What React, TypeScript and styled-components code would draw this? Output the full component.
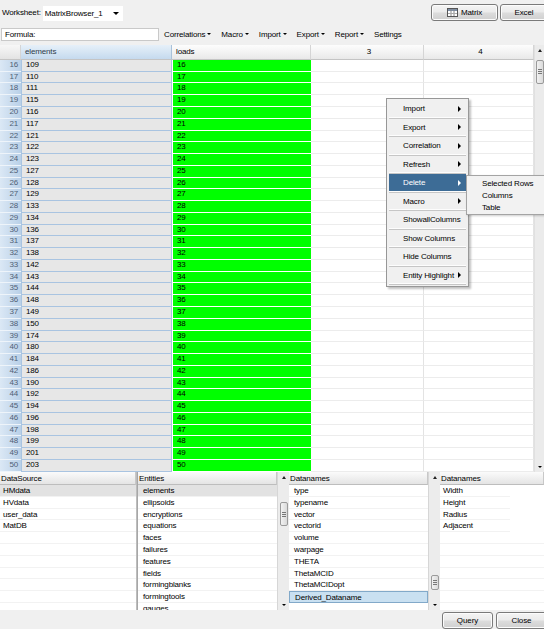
import React from "react";
import styled, { createGlobalStyle, css } from "styled-components";

const GlobalStyle = createGlobalStyle`
  html, body {
    margin: 0;
    padding: 0;
    background: #f0f0f0;
  }
  body {
    font-family: "Liberation Sans", Arial, sans-serif;
    font-size: 8px;
    letter-spacing: -0.15px;
    color: #000;
  }
`;

const Page = styled.div`
  position: relative;
  width: 544px;
  height: 629px;
  display: flex;
  flex-direction: column;
  overflow: hidden;
  background: #f0f0f0;
`;

/* ---------- top bars ---------- */

const TopBar = styled.div`
  height: 26px;
  display: flex;
  align-items: center;
  padding-left: 2px;
  gap: 2px;
`;

const Label = styled.span`
  white-space: nowrap;
`;

const Select = styled.div`
  width: 80px;
  height: 15px;
  box-sizing: border-box;
  background: #fff;
  display: flex;
  align-items: center;
  justify-content: space-between;
  padding: 0 4px 0 2px;
  margin-top: 1px;
`;

const Caret = styled.span<{ $size?: number }>`
  display: inline-block;
  width: 0;
  height: 0;
  border-left: ${(p) => p.$size ?? 3}px solid transparent;
  border-right: ${(p) => p.$size ?? 3}px solid transparent;
  border-top: ${(p) => p.$size ?? 3}px solid #000;
`;

const UpCaret = styled.span`
  display: inline-block;
  width: 0;
  height: 0;
  border-left: 2px solid transparent;
  border-right: 2px solid transparent;
  border-bottom: 3px solid #222;
`;

const Spacer = styled.div`
  flex: 1;
`;

const Button = styled.button<{ $w: number }>`
  width: ${(p) => p.$w}px;
  height: 17px;
  box-sizing: border-box;
  border: 1px solid #7a7a7a;
  border-radius: 3px;
  background: linear-gradient(#f4f4f4 0%, #ebebeb 48%, #dcdcdc 52%, #d0d0d0 100%);
  box-shadow: inset 0 0 0 1px #fcfcfc;
  font-family: "Liberation Sans", Arial, sans-serif;
  font-size: 8px;
  letter-spacing: -0.1px;
  color: #000;
  display: flex;
  align-items: center;
  justify-content: center;
  gap: 3px;
  padding: 0;
`;

const FormulaRow = styled.div`
  height: 17px;
  display: flex;
  align-items: center;
  padding-left: 1px;
  gap: 5px;
`;

const FormulaInput = styled.div`
  width: 158px;
  height: 13px;
  box-sizing: border-box;
  background: #fff;
  border: 1px solid #c9c9c9;
  padding-left: 3px;
  display: flex;
  align-items: center;
`;

const Menus = styled.div`
  display: flex;
  align-items: center;
  gap: 10px;
`;

const MenuItem = styled.span`
  display: inline-flex;
  align-items: center;
  gap: 2px;
  white-space: nowrap;
`;

/* ---------- spreadsheet ---------- */

const SheetArea = styled.div`
  margin-top: 2px;
  height: 428px;
  display: flex;
`;

const Sheet = styled.div`
  width: 534px;
  display: flex;
  flex-direction: column;
  background: #fff;
`;

const COLS = "21px 151px 139px 113px 110px";

const HeaderRow = styled.div`
  height: 15px;
  display: grid;
  grid-template-columns: ${COLS};
`;

const HeadCell = styled.div<{ $tone: "corner" | "selected" | "plain"; $center?: boolean }>`
  box-sizing: border-box;
  border-right: 1px solid #d5d5d5;
  border-bottom: 1px solid #c4c4c4;
  display: flex;
  align-items: center;
  padding-left: 4px;
  justify-content: ${(p) => (p.$center ? "center" : "flex-start")};
  ${(p) =>
    p.$tone === "selected"
      ? css`
          background: linear-gradient(#e6f0f9, #c5daee);
          border-right-color: #a9c2da;
          color: #2c3a4a;
        `
      : p.$tone === "corner"
      ? css`
          background: linear-gradient(#f7f7f7, #e3e3e3);
        `
      : css`
          background: linear-gradient(#fdfdfd, #e9e9e9);
        `}
`;

const Row = styled.div`
  height: 11.78px;
  display: grid;
  grid-template-columns: ${COLS};
`;

const RowNum = styled.div`
  box-sizing: border-box;
  background: linear-gradient(90deg, #dbe8f5, #b9d0e8);
  border-bottom: 1px solid #eef4fa;
  color: #4f5f75;
  text-align: right;
  padding-right: 3px;
  line-height: 10.75px;
`;

const Cell = styled.div<{ $kind: "sel" | "green" | "blank" }>`
  box-sizing: border-box;
  line-height: 10.75px;
  padding-left: 4px;
  white-space: nowrap;
  overflow: hidden;
  ${(p) =>
    p.$kind === "sel"
      ? css`
          background: #e7e7e7;
          border: 1px solid #a9c4e1;
          border-top: none;
        `
      : p.$kind === "green"
      ? css`
          background: #00ff00;
          border-bottom: 1px solid #fff;
          margin-left: 1px;
        `
      : css`
          background: #fff;
          border-bottom: 1px solid #ececec;
          border-right: 1px solid #e3e3e3;
        `}
`;

const VScroll = styled.div`
  width: 10px;
  background: #ebebeb;
  display: flex;
  flex-direction: column;
  align-items: center;
  box-sizing: border-box;
  border-left: 1px solid #e0e0e0;
`;

const ScrollArrow = styled.div`
  height: 11px;
  display: flex;
  align-items: center;
  justify-content: center;
`;

const Thumb = styled.div<{ $h: number; $top: number }>`
  margin-top: ${(p) => p.$top}px;
  width: 8px;
  height: ${(p) => p.$h}px;
  box-sizing: border-box;
  border: 1px solid #9a9a9a;
  border-radius: 2px;
  background: linear-gradient(90deg, #f2f2f2, #dadada);
  display: flex;
  flex-direction: column;
  align-items: center;
  justify-content: center;
  gap: 1px;
`;

const Grip = styled.div`
  width: 4px;
  height: 1px;
  background: #777;
`;

/* ---------- lower list panels ---------- */

const Panels = styled.div`
  height: 138px;
  display: grid;
  grid-template-columns: 136px 2px 139px 12px 139px 12px 104px;
  background: #fff;
`;

const Panel = styled.div`
  display: flex;
  flex-direction: column;
  overflow: hidden;
  background: #fff;
`;

const Divider = styled.div`
  background: linear-gradient(90deg, #c8c8c8, #9c9c9c);
`;

const PanelHead = styled.div`
  height: 13px;
  flex: none;
  box-sizing: border-box;
  background: linear-gradient(#fbfbfb, #e4e4e4);
  border-bottom: 1px solid #bdbdbd;
  border-right: 1px solid #c8c8c8;
  padding-left: 1px;
  display: flex;
  align-items: center;
`;

const ListItem = styled.div<{ $sel?: "gray" | "blue"; $indent: number; $lineW?: number }>`
  height: 11.8px;
  flex: none;
  box-sizing: border-box;
  line-height: 11px;
  padding-left: ${(p) => p.$indent}px;
  white-space: nowrap;
  border-bottom: 1px solid #f2f2f2;
  ${(p) => p.$lineW !== undefined && css`width: ${p.$lineW}px;`}
  ${(p) =>
    p.$sel === "gray"
      ? css`
          background: #e2e2e2;
        `
      : p.$sel === "blue"
      ? css`
          background: #c9e0f1;
          border: 1px solid #82a9c9;
        `
      : ""}
`;

const PanelScroll = styled.div`
  background: #ececec;
  display: flex;
  flex-direction: column;
  align-items: center;
  border-left: 1px solid #d6d6d6;
`;

const ScrollFill = styled.div`
  flex: 1;
`;

/* ---------- footer ---------- */

const Footer = styled.div`
  height: 19px;
  display: flex;
  align-items: center;
  justify-content: flex-end;
  gap: 3px;
  padding-top: 1px;
  box-sizing: border-box;
  margin-right: -3px;
`;

/* ---------- context menu (floats over the grid) ---------- */

const ContextMenu = styled.div`
  position: absolute;
  left: 386px;
  top: 98px;
  width: 83px;
  box-sizing: border-box;
  background: #f0f0f0;
  border: 1px solid #979797;
  box-shadow: 2px 2px 2px rgba(0, 0, 0, 0.25);
  padding: 1px 2px;
`;

const CtxItem = styled.div<{ $active?: boolean }>`
  height: 18.5px;
  box-sizing: border-box;
  display: flex;
  align-items: center;
  justify-content: space-between;
  padding: 0 5px 0 14px;
  border-bottom: 1px solid #c6c6c6;
  box-shadow: inset 0 -1px 0 #fdfdfd;
  white-space: nowrap;
  ${(p) =>
    p.$active &&
    css`
      background: #3d6c96;
      color: #fff;
    `}
`;

const RightTri = styled.span<{ $light?: boolean }>`
  width: 0;
  height: 0;
  border-top: 3px solid transparent;
  border-bottom: 3px solid transparent;
  border-left: 3px solid ${(p) => (p.$light ? "#fff" : "#000")};
`;

const SubMenu = styled.div`
  position: absolute;
  left: 466px;
  top: 175px;
  width: 84px;
  height: 40px;
  box-sizing: border-box;
  background: #f2f2f2;
  border: 1px solid #a4a4a4;
  box-shadow: 1px 1px 2px rgba(0, 0, 0, 0.2);
  padding: 2px 0 0 15px;
`;

const SubItem = styled.div`
  height: 12px;
  line-height: 12px;
  white-space: nowrap;
`;

const MatrixIcon = () => (
  <svg width="11" height="9" viewBox="0 0 11 9">
    <rect x="0.5" y="0.5" width="10" height="8" fill="#fff" stroke="#555" />
    <rect x="1" y="1" width="9" height="2" fill="#7d8fa8" />
    <line x1="4" y1="1" x2="4" y2="8" stroke="#888" />
    <line x1="7" y1="1" x2="7" y2="8" stroke="#888" />
    <line x1="1" y1="5.5" x2="10" y2="5.5" stroke="#aaa" />
  </svg>
);

const elements = [
  109, 110, 111, 115, 116, 117, 121, 122, 123, 127, 128, 129, 133, 134, 136, 137, 138, 142,
  143, 144, 148, 149, 150, 174, 180, 184, 186, 190, 192, 194, 196, 198, 199, 201, 203,
];

const dataSources = ["HMdata", "HVdata", "user_data", "MatDB"];
const entities = [
  "elements", "ellipsoids", "encryptions", "equations", "faces", "failures", "features",
  "fields", "formingblanks", "formingtools", "gauges",
];
const datanames = [
  "type", "typename", "vector", "vectorid", "volume", "warpage", "THETA", "ThetaMCID",
  "ThetaMCIDopt", "Derived_Dataname",
];
const datanames2 = ["Width", "Height", "Radius", "Adjacent"];

const ctxItems: { label: string; sub?: boolean; active?: boolean }[] = [
  { label: "Import", sub: true },
  { label: "Export", sub: true },
  { label: "Correlation", sub: true },
  { label: "Refresh", sub: true },
  { label: "Delete", sub: true, active: true },
  { label: "Macro", sub: true },
  { label: "ShowallColumns" },
  { label: "Show Columns" },
  { label: "Hide Columns" },
  { label: "Entity Highlight", sub: true },
];

const padRows = (items: string[], total: number) => {
  const out = [...items];
  while (out.length < total) out.push("");
  return out;
};

export default function App() {
  return (
    <Page>
      <GlobalStyle />
      <TopBar>
        <Label>Worksheet:</Label>
        <Select>
          <span>MatrixBrowser_1</span>
          <Caret />
        </Select>
        <Spacer />
        <Button $w={67}>
          <MatrixIcon />
          Matrix
        </Button>
        <Button $w={48} style={{ marginRight: -4 }}>Excel</Button>
      </TopBar>

      <FormulaRow>
        <FormulaInput>Formula:</FormulaInput>
        <Menus>
          {["Correlations", "Macro", "Import", "Export", "Report"].map((m) => (
            <MenuItem key={m}>
              {m}
              <Caret $size={2} />
            </MenuItem>
          ))}
          <MenuItem>Settings</MenuItem>
        </Menus>
      </FormulaRow>

      <SheetArea>
        <Sheet>
          <HeaderRow>
            <HeadCell $tone="corner" />
            <HeadCell $tone="selected">elements</HeadCell>
            <HeadCell $tone="plain">loads</HeadCell>
            <HeadCell $tone="plain" $center>3</HeadCell>
            <HeadCell $tone="plain" $center>4</HeadCell>
          </HeaderRow>
          {elements.map((v, i) => (
            <Row key={i}>
              <RowNum>{i + 16}</RowNum>
              <Cell $kind="sel">{v}</Cell>
              <Cell $kind="green">{i + 16}</Cell>
              <Cell $kind="blank" />
              <Cell $kind="blank" />
            </Row>
          ))}
        </Sheet>
        <VScroll>
          <ScrollArrow>
            <UpCaret />
          </ScrollArrow>
          <Thumb $h={24} $top={4}>
            <Grip />
            <Grip />
            <Grip />
          </Thumb>
          <ScrollFill />
          <ScrollArrow>
            <Caret $size={2} />
          </ScrollArrow>
        </VScroll>
      </SheetArea>

      <Panels>
        <Panel>
          <PanelHead>DataSource</PanelHead>
          {padRows(dataSources, 11).map((d, i) => (
            <ListItem key={i} $indent={3} $sel={i === 0 ? "gray" : undefined}>
              {d}
            </ListItem>
          ))}
        </Panel>
        <Divider />
        <Panel>
          <PanelHead>Entities</PanelHead>
          {entities.map((e, i) => (
            <ListItem key={e} $indent={5} $sel={i === 0 ? "gray" : undefined}>
              {e}
            </ListItem>
          ))}
        </Panel>
        <PanelScroll>
          <ScrollArrow>
            <UpCaret />
          </ScrollArrow>
          <Thumb $h={24} $top={19}>
            <Grip />
            <Grip />
            <Grip />
          </Thumb>
          <ScrollFill />
          <ScrollArrow>
            <Caret $size={2} />
          </ScrollArrow>
        </PanelScroll>
        <Panel>
          <PanelHead>Datanames</PanelHead>
          {datanames.map((d, i) => (
            <ListItem key={d} $indent={5} $sel={i === 9 ? "blue" : undefined}>
              {d}
            </ListItem>
          ))}
        </Panel>
        <PanelScroll>
          <ScrollArrow>
            <UpCaret />
          </ScrollArrow>
          <ScrollFill />
          <Thumb $h={15} $top={0}>
            <Grip />
            <Grip />
            <Grip />
          </Thumb>
          <div style={{ height: 9 }} />
          <ScrollArrow>
            <Caret $size={2} />
          </ScrollArrow>
        </PanelScroll>
        <Panel>
          <PanelHead>Datanames</PanelHead>
          {padRows(datanames2, 10).map((d, i) => (
            <ListItem key={i} $indent={3} $lineW={i < 4 ? 70 : undefined}>
              {d}
            </ListItem>
          ))}
        </Panel>
      </Panels>

      <Footer>
        <Button $w={51}>Query</Button>
        <Button $w={51}>Close</Button>
      </Footer>

      <ContextMenu>
        {ctxItems.map((c) => (
          <CtxItem key={c.label} $active={c.active}>
            <span>{c.label}</span>
            {c.sub && <RightTri $light={c.active} />}
          </CtxItem>
        ))}
      </ContextMenu>
      <SubMenu>
        <SubItem>Selected Rows</SubItem>
        <SubItem>Columns</SubItem>
        <SubItem>Table</SubItem>
      </SubMenu>
    </Page>
  );
}
